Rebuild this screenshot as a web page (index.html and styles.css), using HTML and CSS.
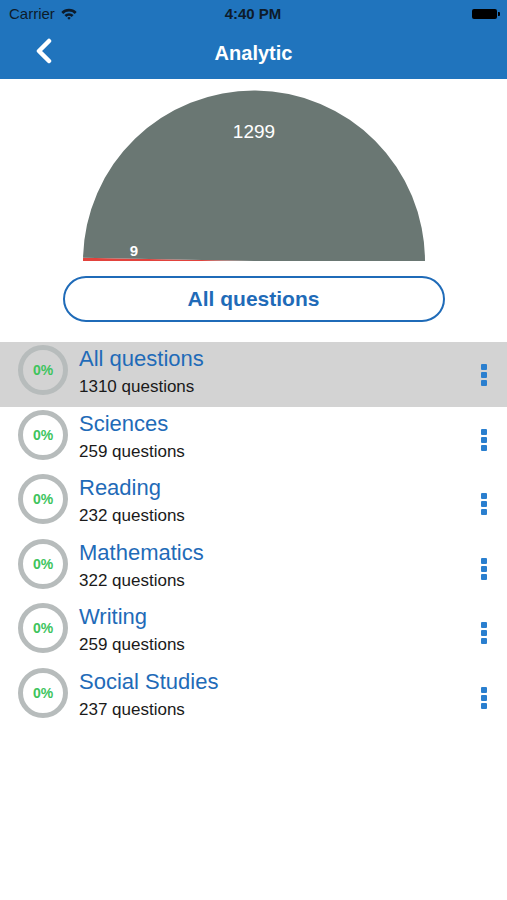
FILE: index.html
```html
<!DOCTYPE html>
<html lang="en">

<head>
  <meta charset="UTF-8" />
  <meta name="viewport" content="width=device-width, initial-scale=1.0" />
  <title>Analytic</title>
  <link rel="stylesheet" href="styles.css">
</head>

<body>
  <div class="topbar">
    <div class="status">
      <div class="carrier">
        Carrier
        <svg class="wifi" width="16" height="12" viewBox="0 0 15 11">
          <path d="M0.3 3.6 A10.2 10.2 0 0 1 14.7 3.6 L12.9 5.4 A7.7 7.7 0 0 0 2.1 5.4 Z" fill="#0d1b2a" />
          <path d="M3.2 6.5 A6 6 0 0 1 11.8 6.5 L10 8.3 A3.5 3.5 0 0 0 5 8.3 Z" fill="#0d1b2a" />
          <path d="M5.9 9.2 A2.2 2.2 0 0 1 9.1 9.2 L7.5 10.8 Z" fill="#0d1b2a" />
        </svg>
      </div>
      <div class="time">4:40 PM</div>
      <div class="battery"><span></span></div>
    </div>
    <div class="nav">
      <svg class="back" width="20" height="26" viewBox="0 0 20 26">
        <polyline points="15,3 5,13 15,23" fill="none" stroke="#fff" stroke-width="4.5" stroke-linecap="round" stroke-linejoin="round" />
      </svg>
      <h1>Analytic</h1>
    </div>
  </div>

  <div class="chart">
    <svg width="344" height="172" viewBox="0 0 344 172">
      <!-- center (172,171), r 171 -->
      <path d="M172 171 L1 171 A171 171 0 0 1 1.04 167.8 Z" fill="#e2423c" />
      <path d="M172 171 L1.04 167.8 A171 171 0 0 1 343 171 Z" fill="#6a7773" />
      <text x="52" y="166" text-anchor="middle" class="small-label">9</text>
      <text x="172" y="48" text-anchor="middle" class="big-label">1299</text>
    </svg>
  </div>

  <button class="filter">All questions</button>

  <ul class="subjects">
    <li class="active">
      <div class="ring">0%</div>
      <div class="info">
        <p class="name">All questions</p>
        <p class="count">1310 questions</p>
      </div>
      <div class="more"><i></i><i></i><i></i></div>
    </li>
    <li>
      <div class="ring">0%</div>
      <div class="info">
        <p class="name">Sciences</p>
        <p class="count">259 questions</p>
      </div>
      <div class="more"><i></i><i></i><i></i></div>
    </li>
    <li>
      <div class="ring">0%</div>
      <div class="info">
        <p class="name">Reading</p>
        <p class="count">232 questions</p>
      </div>
      <div class="more"><i></i><i></i><i></i></div>
    </li>
    <li>
      <div class="ring">0%</div>
      <div class="info">
        <p class="name">Mathematics</p>
        <p class="count">322 questions</p>
      </div>
      <div class="more"><i></i><i></i><i></i></div>
    </li>
    <li>
      <div class="ring">0%</div>
      <div class="info">
        <p class="name">Writing</p>
        <p class="count">259 questions</p>
      </div>
      <div class="more"><i></i><i></i><i></i></div>
    </li>
    <li>
      <div class="ring">0%</div>
      <div class="info">
        <p class="name">Social Studies</p>
        <p class="count">237 questions</p>
      </div>
      <div class="more"><i></i><i></i><i></i></div>
    </li>
  </ul>
</body>

</html>
```

FILE: styles.css
```css
* {
  box-sizing: border-box;
}

body {
  margin: 0;
  background: #fff;
  font-family: "Liberation Sans", Arial, sans-serif;
}

.topbar {
  height: 79px;
  background-color: #2074bd;
}

.status {
  height: 27px;
  padding: 0 10px 0 9px;
  display: flex;
  align-items: center;
  justify-content: space-between;
  color: #0d1b2a;
  font-size: 15px;
}

.carrier {
  width: 120px;
  display: flex;
  align-items: center;
  gap: 6px;
}

.time {
  font-weight: bold;
}

.battery {
  width: 120px;
  display: flex;
  justify-content: flex-end;
  align-items: center;
}

.battery span {
  width: 25px;
  height: 10px;
  background: #000;
  border-radius: 2px;
  position: relative;
}

.battery span::after {
  content: "";
  position: absolute;
  right: -3px;
  top: 3px;
  width: 2px;
  height: 4px;
  background: #000;
  border-radius: 0 1px 1px 0;
}

.nav {
  height: 52px;
  display: flex;
  align-items: center;
  justify-content: center;
  position: relative;
}

.nav .back {
  position: absolute;
  left: 34px;
  top: 11px;
}

.nav h1 {
  margin: 0;
  color: #fff;
  font-size: 20px;
  font-weight: bold;
}

.chart {
  padding-top: 11px;
}

.chart svg {
  display: block;
  margin: 0 auto;
}

.big-label {
  fill: #fff;
  font-size: 19px;
  font-family: "Liberation Sans", Arial, sans-serif;
}

.small-label {
  fill: #fff;
  font-size: 15px;
  font-weight: bold;
  font-family: "Liberation Sans", Arial, sans-serif;
}

.filter {
  display: block;
  width: 382px;
  height: 46px;
  margin: 14px auto 0;
  appearance: none;
  background: #fff;
  border: 2px solid #1f6bb8;
  border-radius: 23px;
  color: #1f6bb8;
  font-family: "Liberation Sans", Arial, sans-serif;
  font-size: 21px;
  font-weight: bold;
  cursor: pointer;
}

.subjects {
  margin: 20px 0 0;
  padding: 0;
  list-style: none;
}

.subjects li {
  height: 64.6px;
  padding: 3px 20px 0 18px;
  display: flex;
  align-items: flex-start;
}

.subjects li.active {
  background: #d3d3d3;
}

.ring {
  width: 50px;
  height: 50px;
  flex-shrink: 0;
  border: 5px solid #b7bcbc;
  border-radius: 50%;
  display: flex;
  align-items: center;
  justify-content: center;
  color: #3ec45d;
  font-size: 14px;
  font-weight: bold;
}

.info {
  flex: 1;
  margin-left: 11px;
  padding-top: 2px;
}

.info p {
  margin: 0;
}

.info .name {
  color: #1f6bb8;
  font-size: 22px;
  line-height: 24px;
}

.info .count {
  margin-top: 4px;
  color: #1a1a1a;
  font-size: 17px;
  line-height: 24px;
}

.more {
  display: flex;
  flex-direction: column;
  gap: 2px;
  padding-top: 19px;
}

.more i {
  display: block;
  width: 6px;
  height: 6px;
  border-radius: 1px;
  background: #2a7fcf;
}
```
